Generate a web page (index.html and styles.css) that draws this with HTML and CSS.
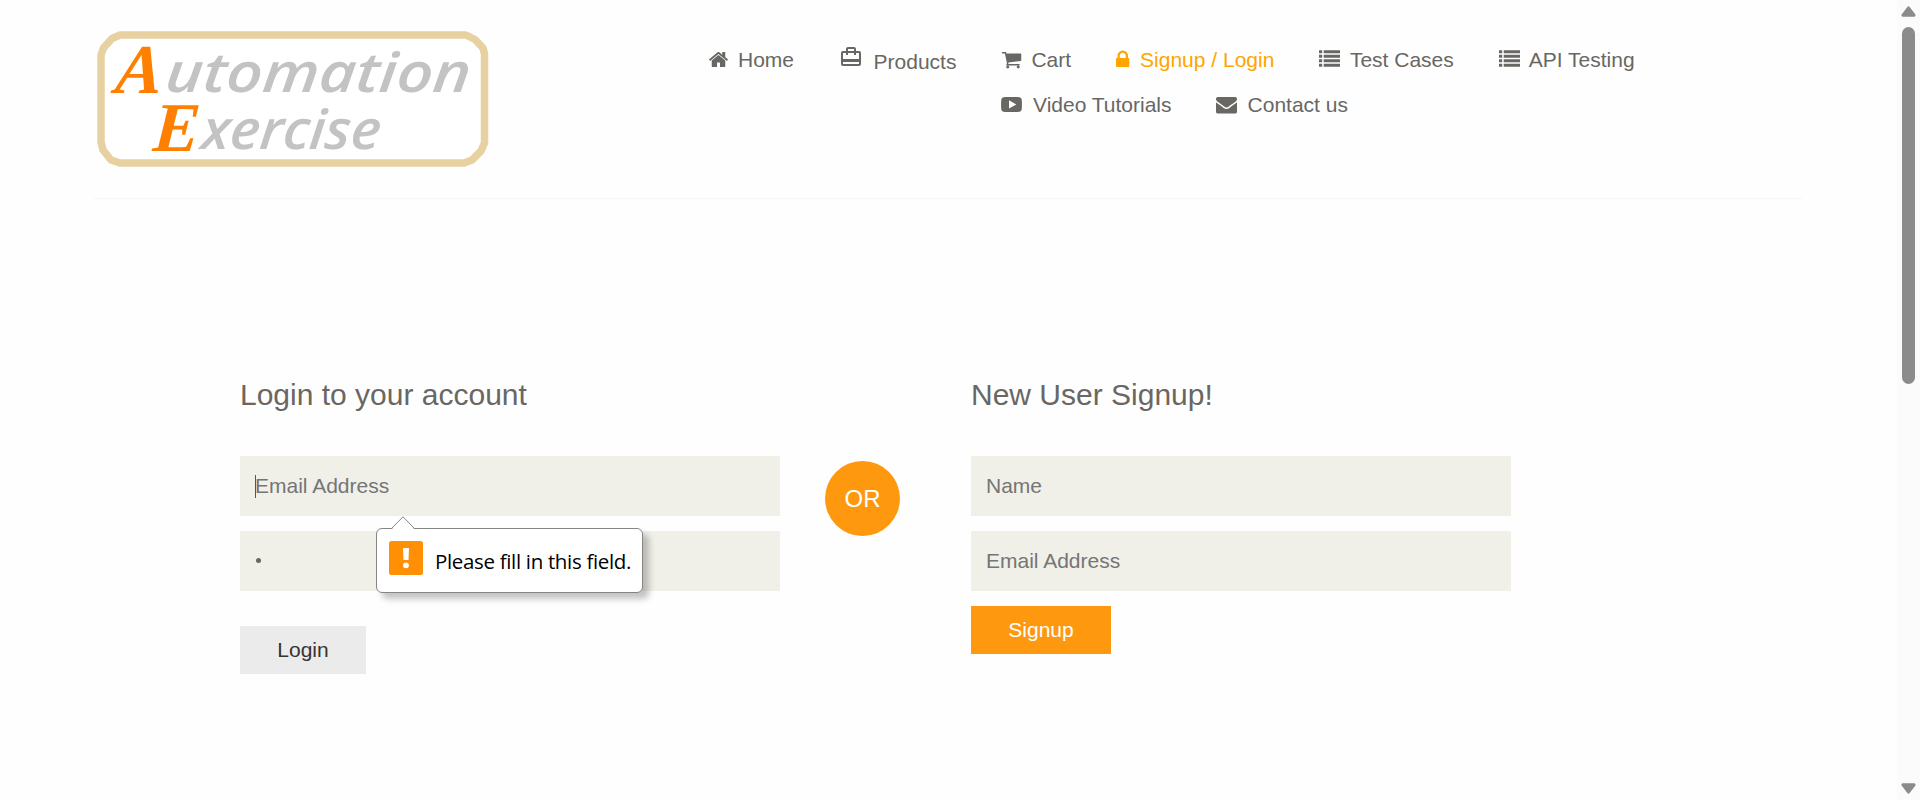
FILE: index.html
```html
<!DOCTYPE html>
<html lang="en">
<head>
<meta charset="utf-8">
<title>Automation Exercise - Signup / Login</title>
<link rel="stylesheet" href="styles.css">
</head>
<body>
<svg class="defs" width="0" height="0">
  <symbol id="home" viewBox="0 0 1792 1792"><path d="M1472 992v480q0 26-19 45t-45 19h-384v-384h-256v384h-384q-26 0-45-19t-19-45v-480q0-1 .5-3t.5-3l575-474 575 474q1 2 1 6zm223-69l-62 74q-8 9-21 11h-3q-13 0-21-7l-692-577-692 577q-12 8-24 7-13-2-21-11l-62-74q-8-10-7-23.5t11-21.5l719-599q32-26 76-26t76 26l244 204v-195q0-14 9-23t23-9h192q14 0 23 9t9 23v408l219 182q10 8 11 21.5t-7 23.5z"/></symbol>
  <symbol id="bag" viewBox="0 0 24 24"><path d="M20 6h-3V4c0-1.11-.89-2-2-2H9c-1.11 0-2 .89-2 2v2H4c-1.11 0-2 .89-2 2v11c0 1.11.89 2 2 2h16c1.11 0 2-.89 2-2V8c0-1.11-.89-2-2-2zM9 4h6v2H9V4zm11 15H4v-2h16v2zm0-5H4V8h3v2h2V8h6v2h2V8h3v6z"/></symbol>
  <symbol id="cart" viewBox="0 0 1792 1792"><path d="M704 1536q0 52-38 90t-90 38-90-38-38-90 38-90 90-38 90 38 38 90zm896 0q0 52-38 90t-90 38-90-38-38-90 38-90 90-38 90 38 38 90zm128-1088v512q0 24-16.5 42.5t-40.5 21.5l-1044 122q13 60 13 70 0 16-24 64h920q26 0 45 19t19 45-19 45-45 19h-1024q-26 0-45-19t-19-45q0-11 8-31.5t16-36 21.5-40 15.5-29.5l-177-823h-204q-26 0-45-19t-19-45 19-45 45-19h256q16 0 28.5 6.5t19.5 15.5 13 24.5 8 26 5.5 29.5 4.5 26h1201q26 0 45 19t19 45z"/></symbol>
  <symbol id="lock" viewBox="320 0 1152 1792"><path d="M640 768h512v-192q0-106-75-181t-181-75-181 75-75 181v192zm832 96v576q0 40-28 68t-68 28h-960q-40 0-68-28t-28-68v-576q0-40 28-68t68-28h32v-192q0-184 132-316t316-132 316 132 132 316v192h32q40 0 68 28t28 68z"/></symbol>
  <symbol id="list" viewBox="0 0 21 21"><path d="M0 1.200h3.200v3H0zM4.700 1.200H21v3H4.700zM0 5.700h3.200v3H0zM4.700 5.700H21v3H4.700zM0 10.200h3.200v3H0zM4.700 10.200H21v3H4.700zM0 14.800h3.200v3H0zM4.700 14.800H21v3H4.700z"/></symbol>
  <symbol id="video" viewBox="0 0 21 21"><path fill-rule="evenodd" d="M4 3Q10.500 2.800 17 3Q20.300 3.200 20.700 5.500Q21.200 10.500 20.700 15.500Q20.300 17.800 17 18Q10.500 18.200 4 18Q.7 17.800.3 15.500Q-.2 10.500.3 5.500Q.7 3.200 4 3zM8 6.200V14.600L15.300 10.400z"/></symbol>
  <symbol id="mail" viewBox="0 0 1792 1792"><path d="M1792 710v794q0 66-47 113t-113 47h-1472q-66 0-113-47t-47-113v-794q44 49 101 87 362 246 497 345 57 42 92.500 65.500t94.500 48 110 24.500h2q51 0 110-24.500t94.500-48 92.500-65.500q170-123 498-345 57-39 100-87zm0-294q0 79-49 151t-122 123q-376 261-468 325-10 7-42.500 31t-54 38.500-52 32.500-57.500 27-50 9h-2q-23 0-50-9t-57.500-27-52-32.500-54-38.500-42.500-31q-91-64-262-182.500t-205-142.500q-62-42-117-115.500t-55-136.500q0-78 41.500-130t118.500-52h1472q65 0 112.500 47t47.500 113z"/></symbol>
</svg>
<div class="page">
  <header class="header">
    <svg class="logo" width="395" height="139" viewBox="0 0 395 139" role="img" aria-label="Automation Exercise">
      <path class="logo-frame" d="M25 6H371L380 10.500L388 19L389.500 25V114L386 122L377 131L369 134H25L16 131L8 121L6 113V26L8.500 19L17 9.500Z"/>
      <text class="logo-cap" transform="translate(19 64) skewX(-6)">A</text>
      <text class="logo-text" transform="translate(69 63) skewX(-6)" textLength="305" lengthAdjust="spacingAndGlyphs">utomation</text>
      <text class="logo-cap" transform="translate(57 122) skewX(-4)">E</text>
      <text class="logo-text" transform="translate(105 120) skewX(-6)" textLength="179" lengthAdjust="spacingAndGlyphs">xercise</text>
    </svg>
    <nav class="nav">
      <div class="nav-row">
        <a class="item home"><svg class="icon"><use href="#home"/></svg>Home</a>
        <a class="item products"><svg class="icon"><use href="#bag"/></svg><span>Products</span></a>
        <a class="item cart"><svg class="icon"><use href="#cart"/></svg>Cart</a>
        <a class="item login active"><svg class="icon"><use href="#lock"/></svg>Signup / Login</a>
        <a class="item cases"><svg class="icon"><use href="#list"/></svg>Test Cases</a>
        <a class="item api"><svg class="icon"><use href="#list"/></svg>API Testing</a>
      </div>
      <div class="nav-row second">
        <a class="item wide"><svg class="icon"><use href="#video"/></svg>Video Tutorials</a>
        <a class="item wide"><svg class="icon"><use href="#mail"/></svg>Contact us</a>
      </div>
    </nav>
  </header>
  <main class="forms">
    <form class="form">
      <h2>Login to your account</h2>
      <div class="field">
        <input type="text" placeholder="Email Address">
        <span class="caret"></span>
        <div class="tip">
          <svg class="tip-arrow" width="24" height="14" viewBox="0 0 24 14"><path class="tip-fill" d="M0 14L12 1L24 14Z"/><path class="tip-line" d="M.5 12.500L12 .8L23.500 12.500"/></svg>
          <svg class="tip-icon" width="34" height="34" viewBox="0 0 34 34"><rect class="tip-box" width="34" height="34" rx="2.500"/><path class="tip-mark" d="M14 7H20L19.500 19H14.500Z"/><circle class="tip-mark" cx="17" cy="24.300" r="2.900"/></svg>
          <span class="tip-text">Please fill in this field.</span>
        </div>
      </div>
      <div class="field password"><span class="dot"></span></div>
      <button class="button grey" type="button">Login</button>
    </form>
    <div class="or">OR</div>
    <form class="form">
      <h2>New User Signup!</h2>
      <div class="field"><input type="text" placeholder="Name"></div>
      <div class="field"><input type="text" placeholder="Email Address"></div>
      <button class="button" type="button">Signup</button>
    </form>
  </main>
</div>
<aside class="scrollbar">
  <svg width="15" height="11" viewBox="0 0 15 11"><path d="M6.300 1Q7.500-.4 8.700 1L14.400 8.600Q15 10.500 13.300 10.700H1.700Q0 10.500.6 8.600Z"/></svg>
  <div class="thumb"></div>
  <svg class="down" width="15" height="11" viewBox="0 0 15 11"><path d="M6.300 10Q7.500 11.400 8.700 10L14.400 2.400Q15 .5 13.300.3H1.700Q0 .5.6 2.400Z"/></svg>
</aside>
</body>
</html>
```
FILE: styles.css
```css
* { box-sizing: border-box; }
body {
  margin: 0;
  height: 800px;
  overflow: hidden;
  display: flex;
  background: #fefefe;
  color: #696763;
  font-family: "Liberation Sans", Arial, sans-serif;
  font-size: 21px;
}
.defs { position: absolute; }
.page { width: 1897px; padding-left: 94px; }
.header {
  width: 1708px;
  height: 199px;
  display: flex;
  align-items: flex-start;
  padding: 29px 0 0 1px;
  border-bottom: 1px solid #f5f5f5;
}
.logo { flex: none; }
.logo-frame { fill: #fff; stroke: #e7d1a0; stroke-width: 7.500; stroke-linejoin: round; }
.logo-cap { font: italic bold 70px "Liberation Serif", serif; fill: #ff8000; }
.logo-text { font: italic 600 55px "Open Sans", sans-serif; fill: #c3c3c3; }
.nav { padding: 18px 0 0 218px; }
.nav-row { display: flex; gap: 45px; height: 45px; }
.second { padding-left: 293px; gap: 44px; }
.item { display: flex; line-height: 25px; white-space: nowrap; }
.icon { flex: none; width: 21px; height: 21px; margin: 2px 9px 0 0; fill: currentColor; }
.active { color: #ffa500; }
.products .icon { width: 24px; height: 24px; margin: -2px 10.500px 0 0; }
.products span { padding-top: 2px; }
.login .icon { width: 13.500px; margin-right: 10.500px; }
.cases .icon { margin-right: 9.500px; }
.wide .icon { margin-right: 11px; }
.forms { display: flex; padding: 179px 0 0 146px; }
.form { width: 540px; }
h2 { margin: 0 0 44px; font-size: 30px; font-weight: 400; line-height: 34px; }
.field { position: relative; height: 60px; margin-bottom: 15px; background: #f0f0e9; }
.field input {
  display: block;
  width: 100%;
  height: 60px;
  padding: 0 15px;
  border: 0;
  outline: 0;
  background: transparent;
  font: inherit;
}
.field input::placeholder { color: #757575; opacity: 1; }
.caret { position: absolute; left: 15px; top: 19px; width: 1px; height: 23px; background: #555; }
.password { display: flex; align-items: center; padding-left: 16px; }
.dot { width: 5px; height: 5px; margin-top: -2px; border-radius: 50%; background: #696763; }
.or {
  flex: none;
  width: 75px;
  height: 75px;
  margin: 83px 71px 0 45px;
  border-radius: 50%;
  background: #fe980f;
  color: #fff;
  font-size: 24px;
  line-height: 75px;
  text-align: center;
}
.button {
  display: block;
  width: 140px;
  height: 48px;
  padding: 0;
  border: 0;
  background: #fe980f;
  color: #fff;
  font: inherit;
}
.grey { width: 126px; margin-top: 35px; background: #ebebeb; color: #363432; }
.tip {
  position: absolute;
  z-index: 1;
  left: 136px;
  top: 72px;
  width: 267px;
  height: 65px;
  display: flex;
  align-items: center;
  padding: 0 0 2px 12px;
  border: 1px solid #858585;
  border-radius: 6px;
  background: #fff;
  box-shadow: 6px 6px 6px rgba(0, 0, 0, .23);
}
.tip-arrow { position: absolute; left: 14px; top: -13px; }
.tip-fill { fill: #fff; }
.tip-line { fill: none; stroke: #858585; }
.tip-icon { flex: none; margin: -3px 12px 0 0; }
.tip-box { fill: #ff8f05; }
.tip-mark { fill: #fff; }
.tip-text { font-family: "Open Sans", "Noto Sans", sans-serif; font-size: 20.500px; letter-spacing: -.33px; color: #000; white-space: nowrap; padding-top: 3px; }
.scrollbar {
  width: 23px;
  height: 800px;
  display: flex;
  flex-direction: column;
  align-items: center;
  padding: 6px 0;
  background: #fbfbfb;
  fill: #8b8b8b;
}
.thumb { width: 13px; height: 357px; margin-top: 10px; border-radius: 7px; background: #8b8b8b; }
.down { margin-top: auto; }
```
